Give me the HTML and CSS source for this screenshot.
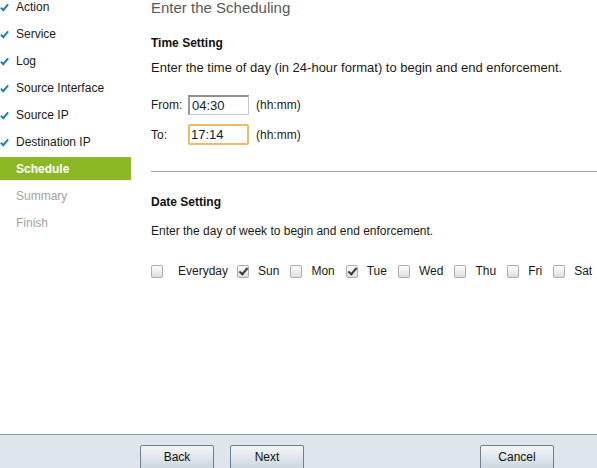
FILE: index.html
```html
<!DOCTYPE html>
<html>
<head>
<meta charset="utf-8">
<link rel="stylesheet" href="styles.css">
</head>
<body>
<div class="page">
  <div class="body">
    <ul class="nav">
      <li class="done"><svg class="tick" viewBox="0 0 10 10"><path d="M1 5.2 L3.6 8 L9 1.6"/></svg>Action</li>
      <li class="done"><svg class="tick" viewBox="0 0 10 10"><path d="M1 5.2 L3.6 8 L9 1.6"/></svg>Service</li>
      <li class="done"><svg class="tick" viewBox="0 0 10 10"><path d="M1 5.2 L3.6 8 L9 1.6"/></svg>Log</li>
      <li class="done"><svg class="tick" viewBox="0 0 10 10"><path d="M1 5.2 L3.6 8 L9 1.6"/></svg>Source Interface</li>
      <li class="done"><svg class="tick" viewBox="0 0 10 10"><path d="M1 5.2 L3.6 8 L9 1.6"/></svg>Source IP</li>
      <li class="done"><svg class="tick" viewBox="0 0 10 10"><path d="M1 5.2 L3.6 8 L9 1.6"/></svg>Destination IP</li>
      <li class="active">Schedule</li>
      <li class="todo">Summary</li>
      <li class="todo">Finish</li>
    </ul>
    <div class="main">
      <h1 class="title">Enter the Scheduling</h1>
      <h2 class="sec sec-time">Time Setting</h2>
      <p class="desc desc-time">Enter the time of day (in 24-hour format) to begin and end enforcement.</p>
      <div class="trow trow-from">
        <span class="tlabel">From:</span>
        <input class="tinput" type="text" value="04:30">
        <span class="unit">(hh:mm)</span>
      </div>
      <div class="trow trow-to">
        <span class="tlabel">To:</span>
        <input class="tinput focus" type="text" value="17:14">
        <span class="unit">(hh:mm)</span>
      </div>
      <div class="rule"></div>
      <h2 class="sec sec-date">Date Setting</h2>
      <p class="desc desc-date">Enter the day of week to begin and end enforcement.</p>
      <div class="days">
        <label class="day first"><input type="checkbox" class="cb">Everyday</label>
        <label class="day"><input type="checkbox" class="cb" checked>Sun</label>
        <label class="day"><input type="checkbox" class="cb">Mon</label>
        <label class="day"><input type="checkbox" class="cb" checked>Tue</label>
        <label class="day"><input type="checkbox" class="cb">Wed</label>
        <label class="day"><input type="checkbox" class="cb">Thu</label>
        <label class="day"><input type="checkbox" class="cb">Fri</label>
        <label class="day"><input type="checkbox" class="cb">Sat</label>
      </div>
    </div>
  </div>
  <div class="footer">
    <button class="btn">Back</button>
    <button class="btn">Next</button>
    <button class="btn cancel">Cancel</button>
  </div>
</div>
</body>
</html>
```
FILE: styles.css
```css
html, body {
  margin: 0;
  padding: 0;
  background: #fff;
}
body {
  font-family: "Liberation Sans", Arial, sans-serif;
  font-size: 12px;
  color: #111;
  overflow: hidden;
}
.page {
  width: 597px;
  height: 468px;
  display: flex;
  flex-direction: column;
}
.body {
  flex: 1;
  display: flex;
  min-height: 0;
}
.nav {
  list-style: none;
  margin: -5px 0 0 0;
  padding: 0;
  width: 131px;
  flex: none;
}
.nav li {
  height: 23px;
  line-height: 25px;
  margin-bottom: 4px;
  padding-left: 16px;
  position: relative;
  font-size: 12px;
  white-space: nowrap;
}
.nav li.done { color: #1a1a1a; }
.nav li.todo { color: #a3a3a3; }
.nav li.active {
  background: #8db825;
  color: #fff;
  font-weight: bold;
}
.tick {
  position: absolute;
  left: 0;
  top: 8px;
  width: 9px;
  height: 9px;
  fill: none;
  stroke: #1b7db3;
  stroke-width: 2.2;
}
.main {
  flex: 1;
  padding-left: 20px;
}
.title {
  margin: -1px 0 0 0;
  font-size: 15px;
  line-height: 18px;
  font-weight: normal;
  color: #585858;
}
.sec {
  margin: 0;
  font-size: 12px;
  line-height: 16px;
  font-weight: bold;
  color: #111;
}
.sec-time { margin-top: 18px; }
.desc {
  margin: 0;
  line-height: 16px;
  color: #1a1a1a;
}
.desc-time { margin-top: 9px; font-size: 13px; }
.trow {
  display: flex;
  align-items: center;
  height: 20px;
}
.trow-from { margin-top: 18px; padding-top: 1px; }
.trow-to { margin-top: 9px; height: 21px; }
.tlabel {
  width: 37px;
  color: #1a1a1a;
}
.tinput {
  box-sizing: border-box;
  width: 61px;
  height: 20px;
  margin: 0 7px 0 0;
  padding: 0 0 0 2px;
  font-family: "Liberation Sans", Arial, sans-serif;
  font-size: 13px;
  color: #0a1a3a;
  border: 1px solid #c8c8c8;
  border-top-color: #8e8e8e;
  border-left-color: #9a9a9a;
  border-width: 2px 1px 1px 2px;
  background: #fff;
  outline: none;
}
.tinput.focus {
  height: 21px;
  border: 2px solid #efbc63;
  border-radius: 2px;
  padding-left: 1px;
}
.unit { color: #1a1a1a; }
.rule {
  margin: 26px 0 0 0;
  border-top: 1px solid #a6a6a6;
}
.sec-date { margin-top: 22px; }
.desc-date { margin-top: 13px; }
.days {
  display: flex;
  align-items: center;
  margin-top: 24px;
  height: 16px;
  white-space: nowrap;
}
.day {
  display: flex;
  align-items: center;
  margin-right: 11px;
  color: #1a1a1a;
}
.cb {
  -webkit-appearance: none;
  appearance: none;
  box-sizing: border-box;
  width: 12px;
  height: 13px;
  margin: 0 9px 0 0;
  border: 1px solid #adadad;
  border-radius: 2px;
  background: linear-gradient(#fdfdfd, #dedede);
  position: relative;
}
.day.first .cb { margin-right: 15px; }
.day.first { margin-right: 9px; }
.cb:checked::after {
  content: "";
  position: absolute;
  left: 3px;
  top: 0px;
  width: 3px;
  height: 7px;
  border: solid #3a3a3a;
  border-width: 0 2px 2px 0;
  transform: rotate(40deg);
}
.footer {
  flex: none;
  border-top: 1px solid #8d9ba6;
  background: #dee5ec;
  display: flex;
  align-items: flex-start;
  padding: 10px 43px 0 140px;
  box-sizing: border-box;
  height: 34px;
}
.btn {
  box-sizing: border-box;
  width: 74px;
  height: 25px;
  margin: 0 16px 0 0;
  padding: 0 0 1px 0;
  font-family: "Liberation Sans", Arial, sans-serif;
  font-size: 12px;
  color: #111;
  border: 1px solid #6f7e8a;
  border-radius: 2px;
  background: linear-gradient(#f4f6f8, #dfe6ec 50%, #c9d4dd);
}
.btn.cancel {
  margin-left: auto;
  margin-right: 0;
}
```
